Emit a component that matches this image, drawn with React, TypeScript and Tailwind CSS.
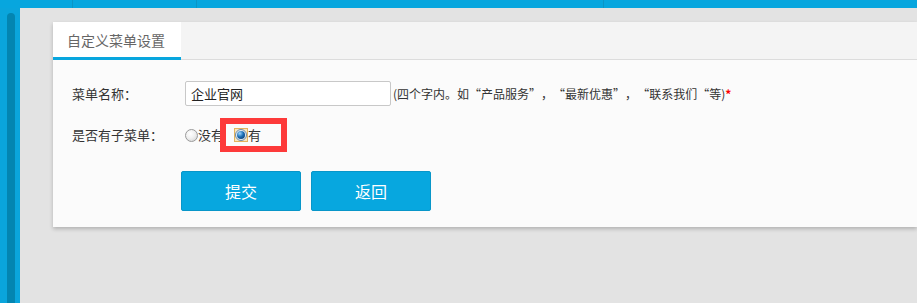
import React from "react";

const font = { fontFamily: '"Noto Sans CJK SC", "Noto Sans", sans-serif' };

function RadioOff() {
  return (
    <span className="inline-block w-[13px] h-[13px] rounded-full border border-[#9a9a9a] bg-[radial-gradient(circle_at_40%_35%,#ffffff_0%,#f0f0f0_45%,#cfcfcf_100%)] shrink-0" />
  );
}

function RadioOn() {
  return (
    <span className="inline-flex items-center justify-center w-[14px] h-[14px] border border-[#e4b35e] bg-[#fbe7bd] shrink-0">
      <span className="inline-flex items-center justify-center w-[12px] h-[12px] rounded-full border border-[#6a8aa8] bg-[#e9eef3]">
        <span className="inline-block w-[8px] h-[8px] rounded-full bg-[radial-gradient(circle_at_35%_30%,#9fd6ff_0%,#1c6fb5_45%,#0a2e5c_100%)]" />
      </span>
    </span>
  );
}

function QL() {
  return <span className="inline-block w-[12px] text-right">“</span>;
}
function QR() {
  return <span className="inline-block w-[12px] text-left">”</span>;
}

export default function App() {
  return (
    <div
      className="relative w-[917px] h-[303px] overflow-hidden bg-[#e3e3e3] flex flex-col"
      style={font}
    >
      {/* top bar */}
      <div className="h-[8px] bg-[#07a6de] flex shrink-0">
        <div className="w-[73px] border-r border-[#0b95c6]" />
        <div className="w-[124px] border-r border-[#0b95c6]" />
        <div className="w-[407px] border-r border-[#0b95c6]" />
        <div className="flex-1" />
      </div>
      <div className="flex flex-1 min-h-0">
        {/* sidebar */}
        <div className="w-[20px] bg-[#0aa5dc] flex flex-col shrink-0">
          <div className="ml-[7px] mt-[5px] w-[8px] flex-1 rounded-t-full bg-[#0385b1]" />
        </div>
        {/* main */}
        <div className="flex-1 pt-[14px] pl-[33px]">
          <div className="bg-[#fbfbfb] shadow-[0_2px_4px_rgba(0,0,0,0.22)]">
            <div className="h-[38px] flex bg-[#f4f4f4] border-b border-[#dcdcdc]">
              <div className="w-[128px] h-[38px] bg-white border-b-[3px] border-[#08a6de] flex items-center pl-[14px] pt-[1px] text-[14px] text-[#666]">
                自定义菜单设置
              </div>
            </div>
            <div className="pt-[21px] pb-[16px] text-[13px] text-[#333]">
              <div className="flex items-center h-[25px]">
                <div className="pl-[19px] w-[132px]">菜单名称：</div>
                <div className="w-[206px] h-[25px] border border-[#c8c8c8] rounded-[2px] bg-white flex items-center pl-[5px] text-[13px] text-[#222]">
                  企业官网
                </div>
                <div className="ml-[2px] text-[12px] text-[#333] whitespace-nowrap">
                  (四个字内。如<QL />产品服务<QR />，<QL />最新优惠<QR />，<QL />联系我们<QL />等)
                  <span className="text-[#ff0000] font-bold">*</span>
                </div>
              </div>
              <div className="flex items-center h-[26px] mt-[16px]">
                <div className="pl-[19px] w-[132px]">是否有子菜单：</div>
                <label className="flex items-center">
                  <RadioOff />
                  <span>没有</span>
                </label>
                <label className="flex items-center ml-[10px]">
                  <RadioOn />
                  <span>有</span>
                </label>
              </div>
              <div className="flex gap-[10px] pl-[128px] mt-[23px]">
                <button className="w-[120px] h-[40px] bg-[#07a7df] border border-[#0896c9] rounded-[2px] text-white text-[16px]">
                  提交
                </button>
                <button className="w-[120px] h-[40px] bg-[#07a7df] border border-[#0896c9] rounded-[2px] text-white text-[16px]">
                  返回
                </button>
              </div>
            </div>
          </div>
        </div>
      </div>
      {/* annotation highlight */}
      <div className="absolute left-[220px] top-[118px] w-[67px] h-[34px] border-[6px] border-[#fd3a3a]" />
    </div>
  );
}
